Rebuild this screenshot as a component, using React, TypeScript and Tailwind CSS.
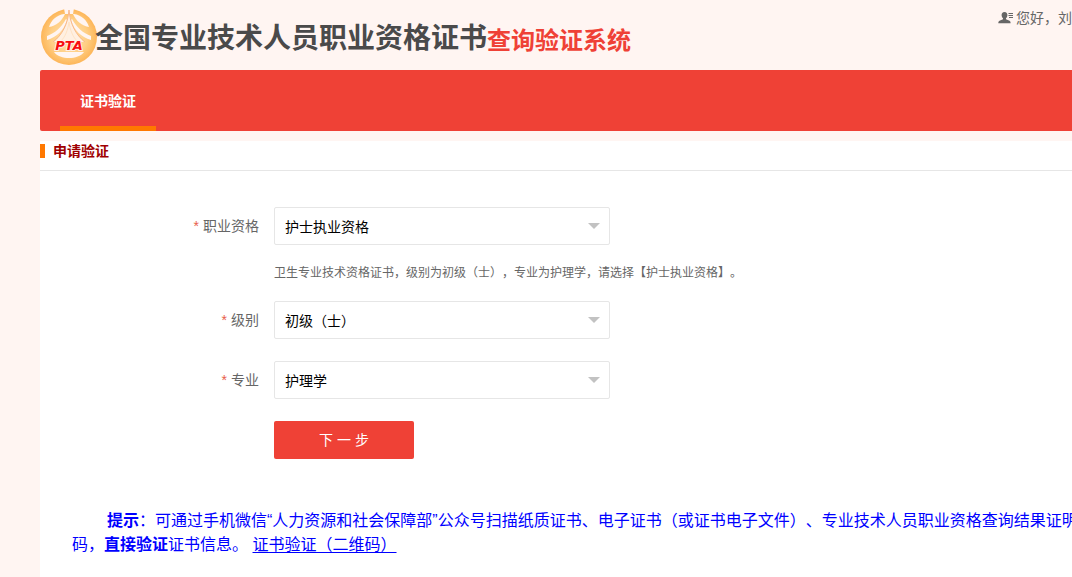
import { useState } from 'react';

const qualifications = ['护士执业资格'];
const levels = ['初级（士）'];
const majors = ['护理学'];

function Logo() {
  return (
    <svg viewBox="0 0 58 58" className="w-[58px] h-[58px] -mr-[3px] shrink-0" role="img" aria-label="PTA">
      <defs>
        <radialGradient id="gold" cx="50%" cy="50%" r="50%">
          <stop offset="0%" stopColor="#ffe2b3" />
          <stop offset="65%" stopColor="#ffcf85" />
          <stop offset="100%" stopColor="#fdb659" />
        </radialGradient>
      </defs>
      <circle cx="29" cy="29" r="28" fill="url(#gold)" />
      {/* gap at the top of the ring */}
      <path d="M24 0 H34 L33 6 H25Z" fill="#fff5f2" />
      {/* wings */}
      <path d="M24 6 C17 7 11 12 9 19 C16 18 22 13 25 6Z" fill="#fff5f2" />
      <path d="M34 6 C41 7 47 12 49 19 C42 18 36 13 33 6Z" fill="#fff5f2" />
      <path d="M26 11 C21 20 15 25 7 28 L7 32 C17 29 24 22 27 12Z" fill="#fff5f2" />
      <path d="M32 11 C37 20 43 25 51 28 L51 32 C41 29 34 22 31 12Z" fill="#fff5f2" />
      {/* peak */}
      <path d="M29 1 C28 15 23 26 14 34 H44 C35 26 30 15 29 1Z" fill="#fff0e2" />
      <path d="M29 2 C28 16 22 27 13 34 M29 2 C30 16 36 27 45 34" fill="none" stroke="#f9b98c" strokeWidth="1" />
      <path d="M29 14 C28 22 25 29 21 33 M29 14 C30 22 33 29 37 33" fill="none" stroke="#ffe3c4" strokeWidth="1" />
      <path d="M14 44 H44 C38 52 20 52 14 44Z" fill="#fff5f2" />
      <text
        x="29"
        y="42"
        textAnchor="middle"
        fill="#f80d10"
        stroke="#fff0e6"
        strokeWidth="2"
        paintOrder="stroke"
        className="font-['DejaVu_Sans'] text-[13px] font-bold italic"
      >
        PTA
      </text>
    </svg>
  );
}

function UserIcon() {
  return (
    <svg viewBox="0 0 16 12" className="w-4 h-3 shrink-0" fill="#666" aria-hidden="true">
      <path d="M6.500 0 C8.500 0 9.500 1.500 9.400 3.200 C9.300 4.800 8.600 5.600 8 6.300 V7.300 L11.500 8.700 C12.400 9.200 12.600 10 12.600 11.300 H0.300 C0.300 10 0.600 9.200 1.500 8.700 L5 7.300 V6.300 C4.400 5.600 3.700 4.800 3.600 3.200 C3.500 1.500 4.500 0 6.500 0Z" />
      <path d="M10.500 1 H15 V2 H10.500Z M10.500 3 H15 V4 H10.500Z M11 5 H15 V6 H11Z" />
    </svg>
  );
}

type SelectRowProps = {
  id: string;
  label: string;
  options: string[];
};

function SelectRow({ id, label, options }: SelectRowProps) {
  const [value, setValue] = useState(options[0]);

  return (
    <div className="flex items-center">
      <label htmlFor={id} className="w-[234px] pr-[15px] text-right text-sm text-[#666] shrink-0">
        <span className="text-[#e8604c] mr-1">*</span>
        {label}
      </label>
      <div className="relative w-[336px]">
        <select
          id={id}
          value={value}
          onChange={(e) => setValue(e.target.value)}
          className="appearance-none w-full h-[38px] pt-[2px] pl-[10px] pr-8 bg-white border border-[#e6e6e6] rounded-xs text-sm text-black"
        >
          {options.map((option) => (
            <option key={option}>{option}</option>
          ))}
        </select>
        <svg
          viewBox="0 0 12 6"
          className="absolute right-[10px] top-4 w-3 h-[6px] pointer-events-none"
          fill="#c2c2c2"
          aria-hidden="true"
        >
          <path d="M0 0 H12 L6 6Z" />
        </svg>
      </div>
    </div>
  );
}

export default function App() {
  return (
    <div
      lang="zh-CN"
      className="min-h-screen flex flex-col pl-10 bg-[#fff5f2] overflow-hidden font-['Liberation_Sans','Noto_Sans_CJK_SC',sans-serif] [text-spacing-trim:space-all]"
    >
      <header className="flex justify-between h-[70px] whitespace-nowrap">
        <h1 className="flex items-center pt-1 font-bold">
          <Logo />
          <span className="pt-1 text-[28px] leading-10 text-[#4a4a4a]">全国专业技术人员职业资格证书</span>
          <span className="pt-2 text-2xl leading-10 text-[#ef4136]">查询验证系统</span>
        </h1>
        <div className="flex items-center self-start h-9 gap-[2px] text-sm text-[#666]">
          <UserIcon />
          <span>您好，刘</span>
        </div>
      </header>

      <nav className="flex h-[61px] pl-5 bg-[#ef4136] rounded-l-xs">
        <a
          href="#verify"
          className="flex items-center px-5 pt-[6px] border-b-[5px] border-[#ff7800] text-sm font-bold text-white"
        >
          证书验证
        </a>
      </nav>

      <main className="flex-1 mt-[10px] bg-white">
        <div className="flex items-center h-[30px] pb-[10px] border-b border-[#e6e6e6]">
          <span className="w-[5px] h-[14px] bg-[#ff7800]" />
          <h2 className="pl-2 text-sm font-bold text-[#a00000]">申请验证</h2>
        </div>

        <form className="pt-9" onSubmit={(e) => e.preventDefault()}>
          <SelectRow id="qualification" label="职业资格" options={qualifications} />
          <p className="ml-[234px] py-[18px] text-xs leading-5 text-[#666]">
            卫生专业技术资格证书，级别为初级（士），专业为护理学，请选择【护士执业资格】。
          </p>
          <div className="flex flex-col gap-[22px]">
            <SelectRow id="level" label="级别" options={levels} />
            <SelectRow id="major" label="专业" options={majors} />
            <button
              type="submit"
              className="ml-[234px] w-[140px] h-[38px] bg-[#ef4136] rounded-xs text-sm text-white"
            >
              下 一 步
            </button>
          </div>
        </form>

        <p className="mt-[50px] ml-8 indent-[35px] text-base leading-6 text-[#0000ff] whitespace-nowrap">
          <strong>提示</strong>
          ：可通过手机微信“人力资源和社会保障部”公众号扫描纸质证书、电子证书（或证书电子文件）、专业技术人员职业资格查询结果证明
          <br />
          码，<strong>直接验证</strong>证书信息。{' '}
          <a href="#qrcode" className="underline underline-offset-2">
            证书验证（二维码）
          </a>
        </p>
      </main>
    </div>
  );
}
